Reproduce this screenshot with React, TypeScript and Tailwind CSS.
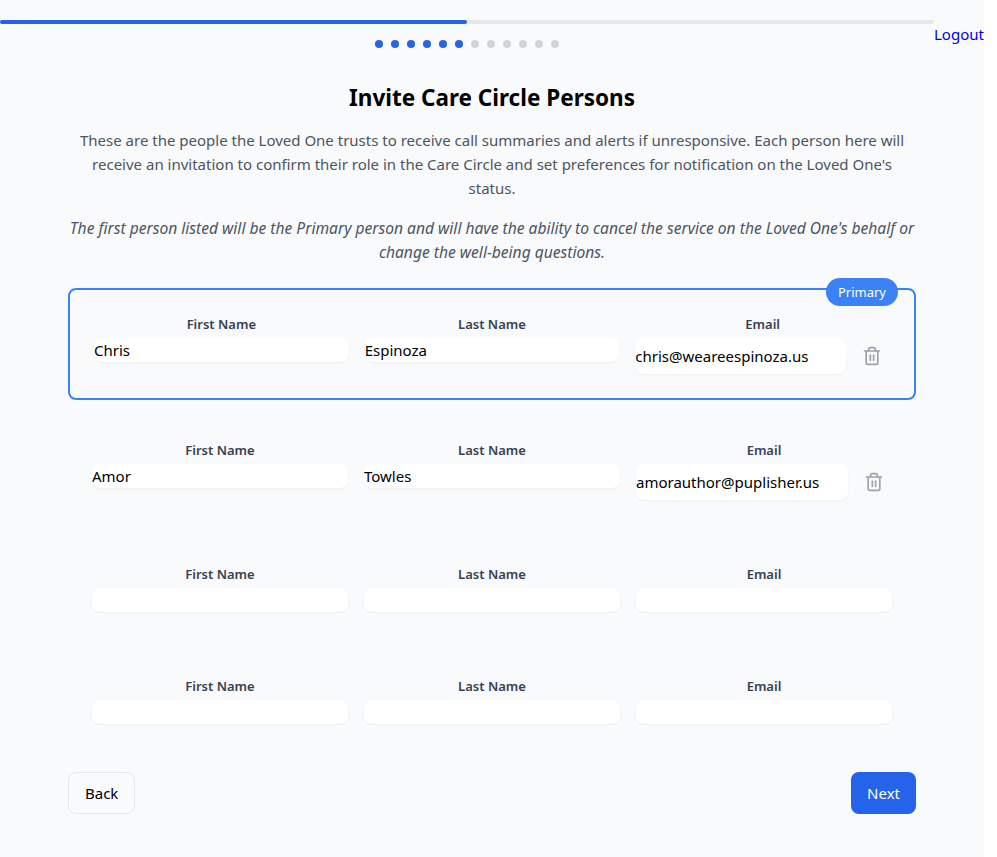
import { Trash2 } from 'lucide-react'

const people = [
  { first: 'Chris', last: 'Espinoza', email: 'chris@weareespinoza.us' },
  { first: 'Amor', last: 'Towles', email: 'amorauthor@puplisher.us' },
  { first: '', last: '', email: '' },
  { first: '', last: '', email: '' },
]

function Label({ text }: { text: string }) {
  return <label className="block text-center text-[13px] font-semibold text-[#374151] mb-1 h-5 leading-5">{text}</label>
}

function TextInput({ value, tall }: { value: string; tall?: boolean }) {
  return (
    <input
      readOnly
      value={value}
      className={`block w-full min-w-0 bg-white rounded-lg shadow-xs outline-none text-black text-[15px] ${tall ? 'h-9' : 'h-6'}`}
    />
  )
}

function PersonRow({ person, index }: { person: (typeof people)[number]; index: number }) {
  const primary = index === 0
  const hasEmail = person.email !== ''

  return (
    <div className={`relative rounded-lg p-6 ${primary ? 'border-2 border-[#3b82f6]' : ''}`}>
      {primary && (
        <span className="absolute -top-3 right-4 h-7 leading-7 px-3 rounded-full bg-[#3b82f6] text-white text-[13px]">
          Primary
        </span>
      )}
      <div className="grid grid-cols-3 gap-4 items-start">
        <div>
          <Label text="First Name" />
          <TextInput value={person.first} />
        </div>
        <div>
          <Label text="Last Name" />
          <TextInput value={person.last} />
        </div>
        <div>
          <Label text="Email" />
          <div className="flex items-center gap-2">
            <TextInput value={person.email} tall={hasEmail} />
            {hasEmail && (
              <button className="p-2 text-[#9ca3af] shrink-0">
                <Trash2 size={20} />
              </button>
            )}
          </div>
        </div>
      </div>
    </div>
  )
}

export default function App() {
  return (
    <div className="w-[984px] min-h-[857px] bg-[#f9fafb] font-['Noto_Sans',sans-serif] text-[15px] leading-6">
      <div className="flex">
        <div className="w-[934px] pt-5 shrink-0">
          <div className="h-1 bg-[#e5e7eb] rounded-full">
            <div className="h-1 w-1/2 bg-[#2563eb] rounded-full" />
          </div>
          <div className="flex justify-center gap-2 mt-4">
            {Array.from({ length: 12 }, (_, i) => (
              <span key={i} className={i < 6 ? 'w-2 h-2 rounded-full bg-[#2563eb]' : 'w-2 h-2 rounded-full bg-[#d1d5db]'} />
            ))}
          </div>
        </div>
        <a className="mt-[22px] text-[#0000ee] whitespace-nowrap">Logout</a>
      </div>

      <div className="w-[848px] ml-[68px] mt-[34px]">
        <h1 className="text-[22.5px] leading-8 font-bold text-black text-center mb-[14px]">Invite Care Circle Persons</h1>
        <p className="text-[#4b5563] text-center mb-4">
          These are the people the Loved One trusts to receive call summaries and alerts if unresponsive. Each person here will receive an invitation to confirm their role in the Care Circle and set preferences for notification on the Loved One's status.
        </p>
        <p className="text-[#4b5563] text-center text-[15.6px] italic mb-6">
          The first person listed will be the Primary person and will have the ability to cancel the service on the Loved One's behalf or change the well-being questions.
        </p>

        <div className="flex flex-col gap-4">
          {people.map((person, i) => (
            <PersonRow key={i} person={person} index={i} />
          ))}
        </div>

        <div className="flex justify-between mt-6">
          <button className="px-4 py-2 border border-[#e5e7eb] rounded-lg text-black">Back</button>
          <button className="px-4 py-[9px] bg-[#2563eb] rounded-lg text-white">Next</button>
        </div>
      </div>
    </div>
  )
}
